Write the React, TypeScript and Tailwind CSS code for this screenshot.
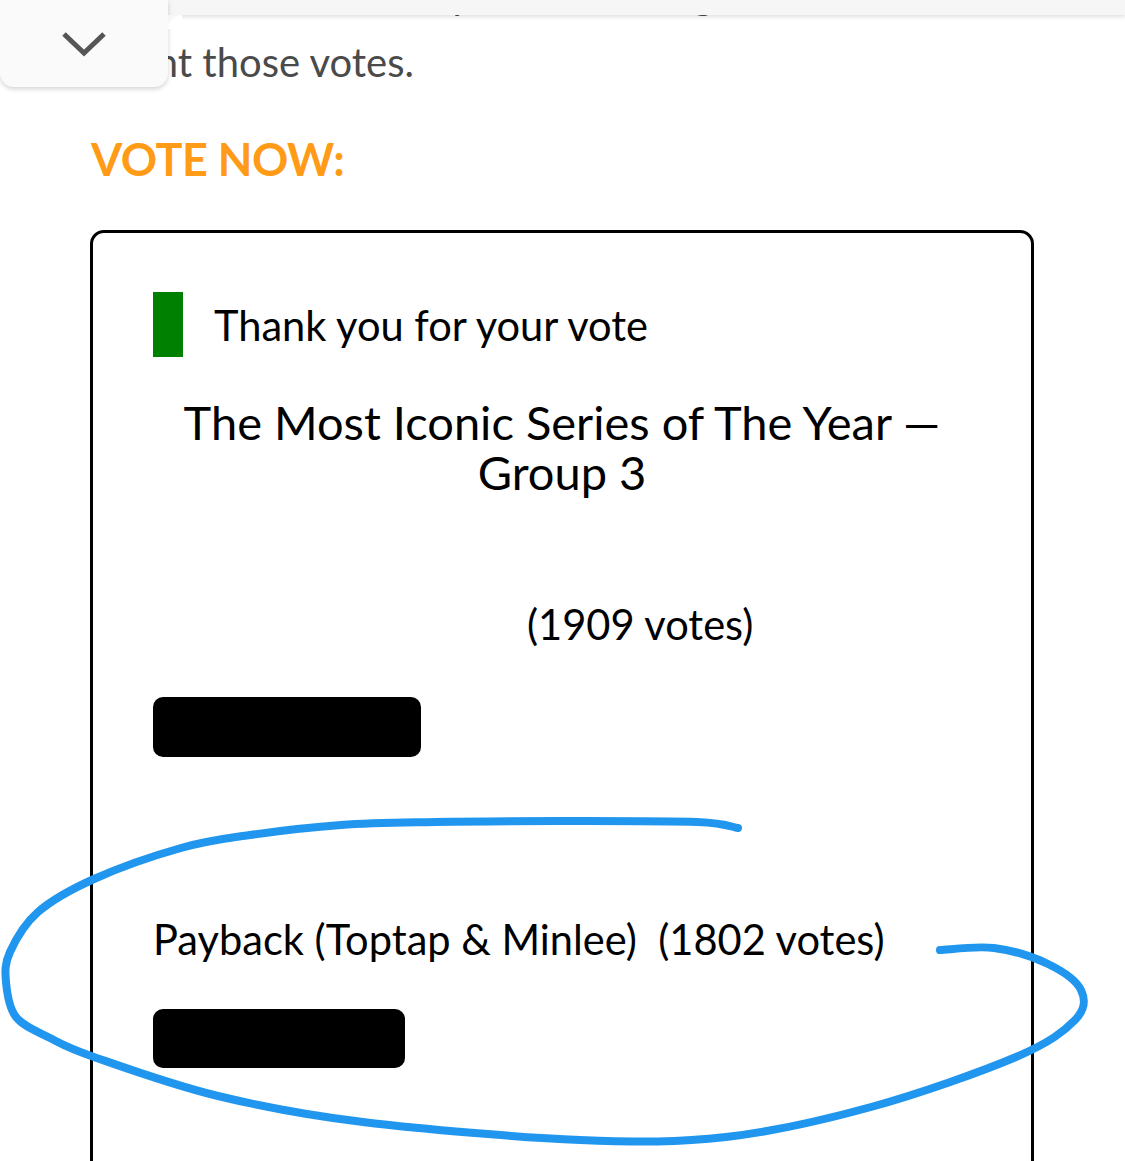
import React from 'react';

const lato = { fontFamily: 'Lato, "Open Sans", Arial, sans-serif' };

// Results list for the poll card; names hidden by the site show as blank space
const results = [
    { name: '', votes: 1909, bar: 268, height: 60, pad: 'pl-[374px]', top: 'mt-[102px]', gap: 'mt-[48px]' },
    { name: 'Payback (Toptap & Minlee)', votes: 1802, bar: 252, height: 59, pad: 'pl-0', top: 'mt-[157px]', gap: 'mt-[45px]' },
];

// Hand-drawn loop around the second result
const loop: [number, number][] = [
    [738, 828], [697, 822], [560, 821], [435, 822], [341, 825], [250, 835], [181, 848],
    [94, 879], [38, 912], [10, 952], [6, 982], [16, 1017], [50, 1038], [94, 1057],
    [218, 1096], [363, 1122], [580, 1140], [726, 1137], [871, 1107], [1016, 1057],
    [1075, 1020], [1081, 990], [1048, 964], [994, 948], [940, 950],
];

function smoothPath(pts: [number, number][]) {
    let d = `M${pts[0][0]} ${pts[0][1]}`;
    for (let i = 0; i < pts.length - 1; i++) {
        const p0 = pts[i - 1] ?? pts[i];
        const p1 = pts[i];
        const p2 = pts[i + 1];
        const p3 = pts[i + 2] ?? p2;
        const c1x = p1[0] + (p2[0] - p0[0]) / 6;
        const c1y = p1[1] + (p2[1] - p0[1]) / 6;
        const c2x = p2[0] - (p3[0] - p1[0]) / 6;
        const c2y = p2[1] - (p3[1] - p1[1]) / 6;
        d += ` C${c1x.toFixed(1)} ${c1y.toFixed(1)}, ${c2x.toFixed(1)} ${c2y.toFixed(1)}, ${p2[0]} ${p2[1]}`;
    }
    return d;
}

function TopChrome() {
    return (
        <div className="absolute inset-x-0 top-0 z-10 pointer-events-none">
            <div className="h-[15px] w-full bg-[#f6f6f6] shadow-[0_2px_4px_rgba(0,0,0,0.12)]"></div>
            <div className="absolute left-0 top-0 w-[168px] h-[87px] bg-[#fafafa] rounded-b-[14px] shadow-[0_2px_5px_rgba(0,0,0,0.18)] flex items-center justify-center">
                <svg width="46" height="28" viewBox="0 0 46 28" fill="none" className="mt-[1px]">
                    <path d="M3 4 L23 23 L43 4" stroke="#555" strokeWidth="5" />
                </svg>
            </div>
            {/* inner corner where the tab meets the bar */}
            <div className="absolute left-[168px] top-[15px] w-[14px] h-[14px] bg-[#f6f6f6]">
                <div className="w-full h-full bg-white rounded-tl-[14px]"></div>
            </div>
        </div>
    );
}

function Scribble() {
    return (
        <svg className="absolute left-0 top-0 pointer-events-none" width="1125" height="1161" viewBox="0 0 1125 1161" fill="none">
            <path d={smoothPath(loop)} stroke="#2196ee" strokeWidth="8" strokeLinecap="round" strokeLinejoin="round" />
        </svg>
    );
}

export default function App() {
    return (
        <div className="relative w-[1125px] h-[1161px] overflow-hidden bg-white" style={lato}>
            <TopChrome />

            <div className="pl-[90px] pr-[91px]">
                <p className="mt-[-40px] pl-[2px] text-[40px] leading-[68px] text-[#4a4a4a] whitespace-nowrap">
                    the team is now all up and counting, so we can
                    <br />
                    count those votes.
                </p>

                <h2 className="mt-[35px] pl-[1px] text-[45px] leading-[56px] font-bold text-[#ff9b16] tracking-[-0.5px]">
                    VOTE NOW:
                </h2>

                <div className="mt-[43px] border-[3px] border-black rounded-[14px] h-[1000px] px-[60px] pt-[59px]">
                    <div className="flex items-center gap-[31px]">
                        <span className="w-[30px] h-[65px] bg-[#008000] shrink-0"></span>
                        <span className="text-[41.6px] leading-[52px] text-black">Thank you for your vote</span>
                    </div>

                    <h3 className="mt-[40px] text-center text-[47px] leading-[50px] text-black">
                        The Most Iconic Series of The Year —
                        <br />
                        Group 3
                    </h3>

                    {results.map((r) => (
                        <div key={r.votes}>
                            <p className={`${r.top} ${r.pad} text-[41.6px] leading-[50px] text-black whitespace-pre`}>
                                {r.name ? `${r.name}  ` : ''}({r.votes} votes)
                            </p>
                            <div
                                className={`${r.gap} bg-black rounded-[10px]`}
                                style={{ width: r.bar, height: r.height }}
                            ></div>
                        </div>
                    ))}
                </div>
            </div>

            <Scribble />
        </div>
    );
}
